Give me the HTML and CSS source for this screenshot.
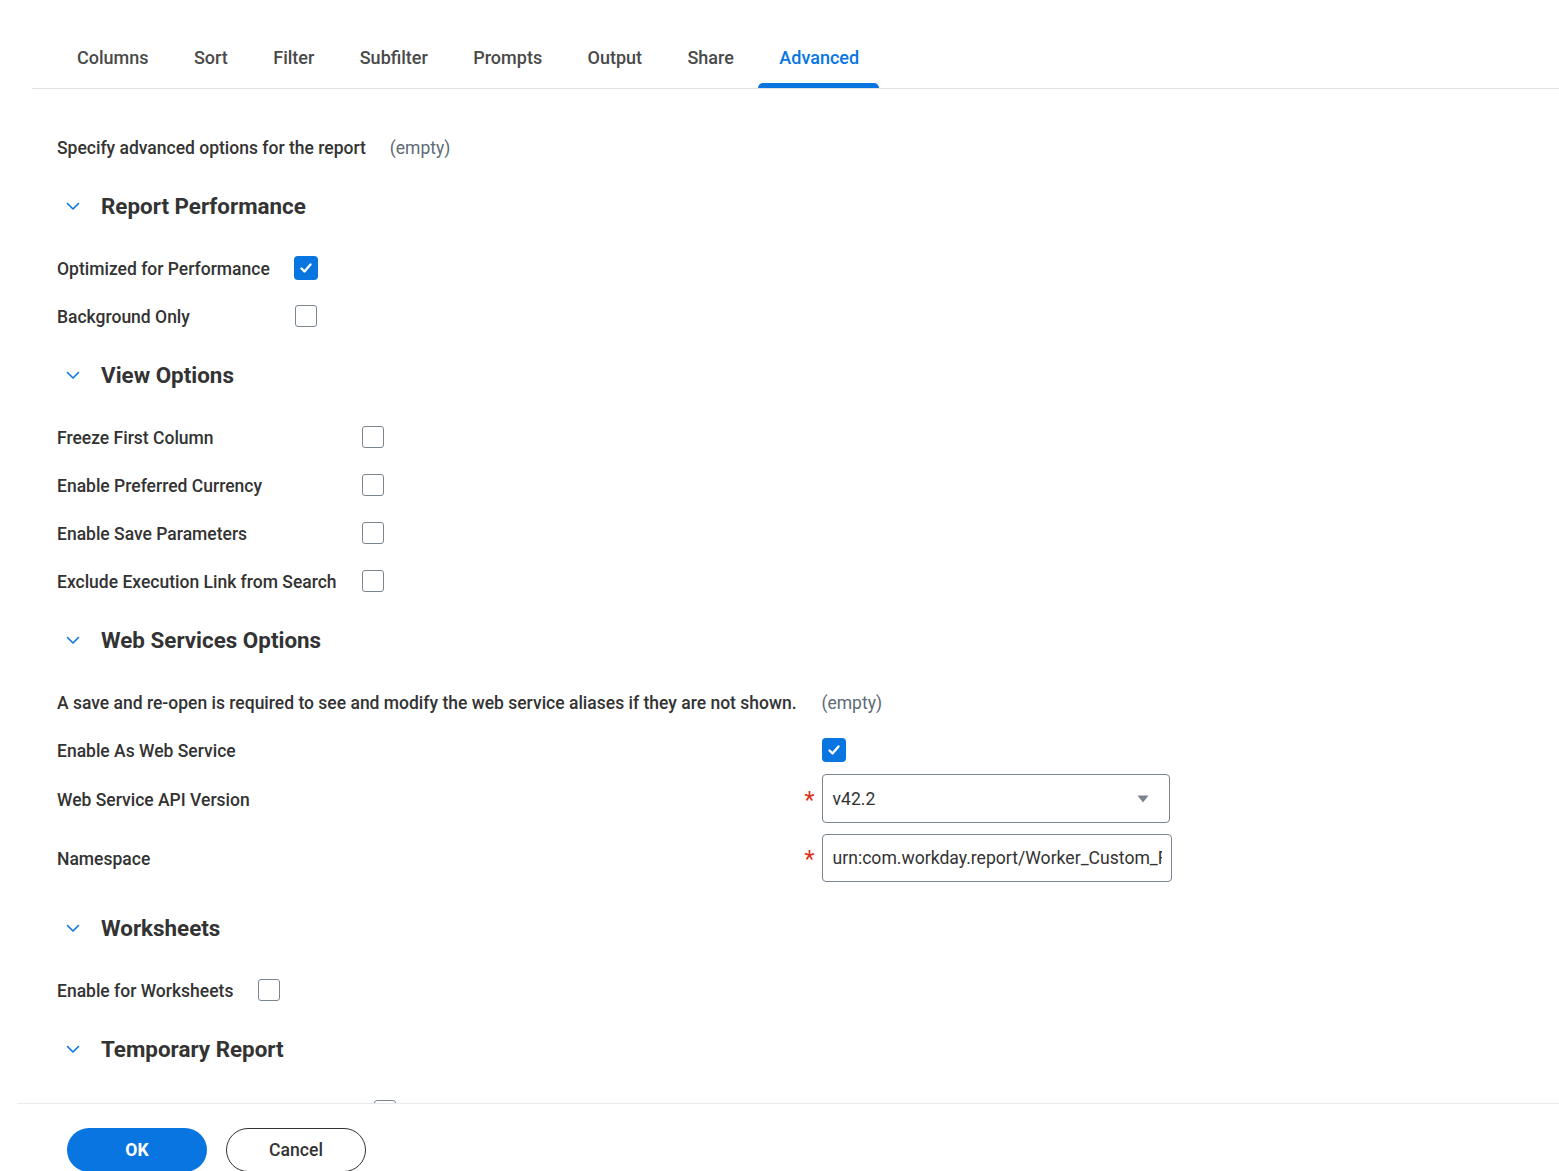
FILE: index.html
```html
<!DOCTYPE html>
<html lang="en">
<head>
<meta charset="utf-8">
<title>Advanced</title>
<link rel="stylesheet" href="styles.css">
</head>
<body>
<div class="page">
  <nav class="tabs">
    <a class="tab">Columns</a>
    <a class="tab">Sort</a>
    <a class="tab">Filter</a>
    <a class="tab">Subfilter</a>
    <a class="tab">Prompts</a>
    <a class="tab">Output</a>
    <a class="tab">Share</a>
    <a class="tab active">Advanced</a>
  </nav>

  <main class="content">
    <div class="grid">
      <span class="label">Specify advanced options for the report</span>
      <span class="empty">(empty)</span>
    </div>

    <section class="section">
      <h2 class="section-head"><svg class="chev" width="16" height="16" viewBox="0 0 16 16"><path d="M2.5 5.5 L8 11 L13.5 5.5" fill="none" stroke="#0875e1" stroke-width="1.6" stroke-linecap="round" stroke-linejoin="round"/></svg>Report Performance</h2>
      <div class="grid">
        <span class="label">Optimized for Performance</span>
        <span class="cb checked"><svg width="24" height="24" viewBox="0 0 24 24"><path d="M7.5 12.5 L10.5 15.5 L16.5 8.5" fill="none" stroke="#fff" stroke-width="2.4" stroke-linecap="round" stroke-linejoin="round"/></svg></span>
        <span class="label">Background Only</span>
        <span class="cb"></span>
      </div>
    </section>

    <section class="section">
      <h2 class="section-head"><svg class="chev" width="16" height="16" viewBox="0 0 16 16"><path d="M2.5 5.5 L8 11 L13.5 5.5" fill="none" stroke="#0875e1" stroke-width="1.6" stroke-linecap="round" stroke-linejoin="round"/></svg>View Options</h2>
      <div class="grid">
        <span class="label">Freeze First Column</span>
        <span class="cb"></span>
        <span class="label">Enable Preferred Currency</span>
        <span class="cb"></span>
        <span class="label">Enable Save Parameters</span>
        <span class="cb"></span>
        <span class="label">Exclude Execution Link from Search</span>
        <span class="cb"></span>
      </div>
    </section>

    <section class="section">
      <h2 class="section-head"><svg class="chev" width="16" height="16" viewBox="0 0 16 16"><path d="M2.5 5.5 L8 11 L13.5 5.5" fill="none" stroke="#0875e1" stroke-width="1.6" stroke-linecap="round" stroke-linejoin="round"/></svg>Web Services Options</h2>
      <div class="grid grid-wide">
        <span class="label">A save and re-open is required to see and modify the web service aliases if they are not shown.</span>
        <span class="empty">(empty)</span>
        <span class="label">Enable As Web Service</span>
        <span class="cb checked"><svg width="24" height="24" viewBox="0 0 24 24"><path d="M7.5 12.5 L10.5 15.5 L16.5 8.5" fill="none" stroke="#fff" stroke-width="2.4" stroke-linecap="round" stroke-linejoin="round"/></svg></span>
        <span class="label">Web Service API Version</span>
        <div class="field required">
          <div class="select">
            <span class="select-value">v42.2</span>
            <svg class="caret" width="12" height="8" viewBox="0 0 12 8"><path d="M0.5 0.5 H11.5 L6 7.5 Z" fill="#7b858f"/></svg>
          </div>
        </div>
        <span class="label">Namespace</span>
        <div class="field required input-cell">
          <div class="input"><span class="input-value">urn:com.workday.report/Worker_Custom_Report_Advanced</span></div>
        </div>
      </div>
    </section>

    <section class="section">
      <h2 class="section-head"><svg class="chev" width="16" height="16" viewBox="0 0 16 16"><path d="M2.5 5.5 L8 11 L13.5 5.5" fill="none" stroke="#0875e1" stroke-width="1.6" stroke-linecap="round" stroke-linejoin="round"/></svg>Worksheets</h2>
      <div class="grid">
        <span class="label">Enable for Worksheets</span>
        <span class="cb"></span>
      </div>
    </section>

    <section class="section">
      <h2 class="section-head"><svg class="chev" width="16" height="16" viewBox="0 0 16 16"><path d="M2.5 5.5 L8 11 L13.5 5.5" fill="none" stroke="#0875e1" stroke-width="1.6" stroke-linecap="round" stroke-linejoin="round"/></svg>Temporary Report</h2>
      <div class="grid">
        <span class="label label-temp">Temporary Report</span>
        <span class="cb"></span>
      </div>
    </section>
  </main>

  <footer class="footer">
    <button class="btn btn-primary">OK</button>
    <button class="btn btn-secondary">Cancel</button>
  </footer>
</div>
</body>
</html>
```

FILE: styles.css
```css
* { box-sizing: border-box; }

html, body {
  margin: 0;
  padding: 0;
  background: #ffffff;
}

body {
  font-family: Roboto, "Liberation Sans", Arial, sans-serif;
  color: #333333;
}

.page {
  min-height: 1400px;
}

/* Tabs */
.tabs {
  display: flex;
  gap: 4.4px;
  margin-left: 32px;
  padding-left: 24px;
  border-bottom: 1px solid #dfe2e6;
  height: 89px;
}

.tab {
  position: relative;
  display: block;
  padding: 46px 20px 0 21px;
  font-size: 18px;
  line-height: 24px;
  font-weight: 500;
  color: #494949;
  cursor: pointer;
}

.tab.active {
  color: #0875e1;
}

.tab.active::after {
  content: "";
  position: absolute;
  left: 0;
  right: 0;
  bottom: 0;
  height: 5px;
  background: #0875e1;
  border-radius: 5px 5px 0 0;
}

/* Content */
.content {
  padding: 34px 0 0 57px;
}

.grid {
  display: grid;
  grid-template-columns: max-content 1fr;
  column-gap: 24px;
  grid-auto-rows: minmax(48px, auto);
  align-items: center;
  justify-items: start;
}

.grid-wide {
  column-gap: 25px;
}

.label {
  padding-top: 2px;
  font-size: 17.5px;
  line-height: 24px;
  font-weight: 500;
  color: #333333;
}

.label-temp {
  min-width: 292px;
}

.empty {
  padding-top: 2px;
  font-size: 17.5px;
  line-height: 24px;
  color: #5e6a75;
}

.section-head {
  display: flex;
  align-items: center;
  height: 48px;
  margin: 11px 0 14px;
  font-size: 22.4px;
  font-weight: 700;
  color: #333333;
}

.chev {
  margin-left: 8px;
  margin-right: 20px;
  flex: none;
}

/* Checkbox */
.cb {
  display: block;
  width: 22px;
  height: 22px;
  margin: 1px;
  border: 1px solid #7b858f;
  border-radius: 3px;
  background: #ffffff;
}

.cb.checked {
  width: 24px;
  height: 24px;
  margin: 0;
  border: none;
  border-radius: 4px;
  background: #0875e1;
}

.cb.checked svg {
  display: block;
}

/* Fields */
.field {
  position: relative;
}

.field.required::before {
  content: "*";
  position: absolute;
  right: calc(100% + 7px);
  top: 50%;
  transform: translateY(-40%);
  font-size: 23px;
  line-height: 22px;
  color: #de2e21;
}

.input-cell {
  padding: 11px 0;
}

.select {
  display: flex;
  align-items: center;
  justify-content: space-between;
  width: 348px;
  height: 49px;
  padding: 0 20px 0 10px;
  border: 1px solid #7b858f;
  border-radius: 4px;
  font-size: 17.6px;
  color: #333333;
}

.input {
  display: flex;
  align-items: center;
  width: 350px;
  height: 48px;
  padding: 0 9px 0 10px;
  border: 1px solid #7b858f;
  border-radius: 4px;
  font-size: 17.6px;
  color: #333333;
  overflow: hidden;
}

.input-value {
  display: block;
  white-space: nowrap;
  overflow: hidden;
  width: 100%;
}

/* Footer */
.footer {
  position: fixed;
  left: 17px;
  right: 0;
  bottom: 0;
  height: 68px;
  overflow: hidden;
  display: flex;
  align-items: flex-start;
  gap: 19px;
  padding: 24px 0 0 50px;
  background: #ffffff;
  border-top: 1px solid #e8eaed;
}

.btn {
  width: 140px;
  height: 44px;
  border-radius: 22px;
  font-family: Roboto, "Liberation Sans", Arial, sans-serif;
  font-size: 17.6px;
  cursor: pointer;
}

.btn-primary {
  background: #0875e1;
  border: none;
  color: #ffffff;
  font-weight: 700;
}

.btn-secondary {
  background: #ffffff;
  border: 1px solid #333333;
  color: #333333;
  font-weight: 500;
}
```
